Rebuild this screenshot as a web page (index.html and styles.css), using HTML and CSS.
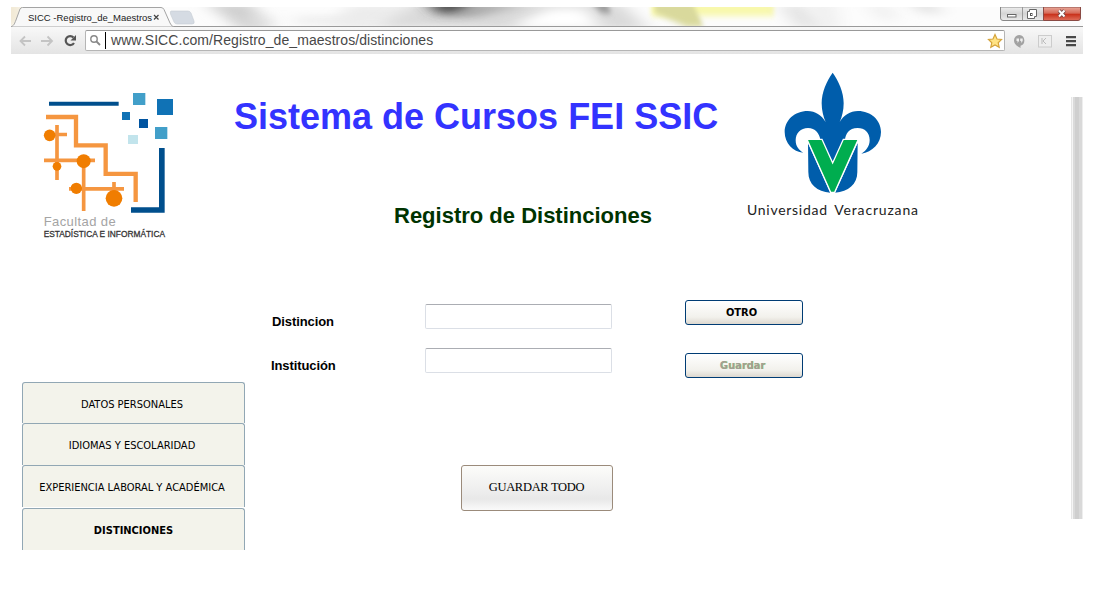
FILE: index.html
```html
<!DOCTYPE html>
<html lang="es">
<head>
<meta charset="utf-8">
<title>SICC - Registro de Maestros</title>
<link rel="stylesheet" href="styles.css">
</head>
<body>
<div class="browser">
  <div class="tabstrip">
    <svg class="glass" width="1072" height="20" viewBox="11 7 1072 20">
      <defs>
        <filter id="b" x="-30%" y="-150%" width="160%" height="400%"><feGaussianBlur stdDeviation="9 4"/></filter>
        <filter id="s" x="-30%" y="-150%" width="160%" height="400%"><feGaussianBlur stdDeviation="2 3"/></filter>
      </defs>
      <rect x="11" y="7" width="1072" height="20" fill="#fcfcfc"/>
      <path d="M0 0H20V26H0Z" fill="#eee3c8" filter="url(#b)"/>
      <path d="M205 2H250L272 29H240Z" fill="#d0d0d0" filter="url(#b)"/>
      <path d="M246 18H272V23H246ZM295 18H390V23H295Z" fill="#e4e4e4" filter="url(#b)"/>
      <path d="M350 4H440L400 27H330Z" fill="#ececec" filter="url(#b)"/>
      <path d="M420 2H620L650 30H520L380 27Z" fill="#dadada" filter="url(#b)"/>
      <path d="M425 0H480L470 12L440 15Z" fill="#444" filter="url(#b)"/>
      <path d="M478 2H530L480 16H450Z" fill="#aaa" filter="url(#b)"/>
      <path d="M520 22L550 8H585L602 29H515Z" fill="#fff" filter="url(#b)"/>
      <path d="M590 2H606L612 13H602Z" fill="#999" filter="url(#s)"/>
      <path d="M651 2H774V16H651Z" fill="#f8f8aa" filter="url(#s)"/>
      <path d="M655 2H692L704 27H687L655 13Z" fill="#d9d99c" filter="url(#s)"/>
      <path d="M778 4H805L830 28H797Z" fill="#e4e4e4" filter="url(#b)"/>
      <path d="M805 0H835L840 28H820ZM865 2H885L900 20H880Z" fill="#f0f0f0" filter="url(#b)"/>
      <path d="M905 0H925L945 13H925Z" fill="#ddd" filter="url(#b)"/>
      <path d="M11 26.5H1083" stroke="#9a9a9a"/>
      <path d="M11 27C14 25 14 25 16 20L20 9Q20.700 7.500 22.500 7.500H161Q163 7.500 164 9.500L170 23Q171.500 26.500 174 27Z" fill="#f8f8f8" stroke="#a4a4a4"/>
      <path d="M171 11H188Q190 11 191 13L194 21Q195 24 192 24H177Q175 24 174 22L170.500 14Q170 11 171 11Z" fill="#d5dbe3" stroke="#c6ccd4" stroke-width=".6"/>
      <path d="M154 15L158.500 19.500M158.500 15L154 19.500" stroke="#444" stroke-width="1.200"/>
    </svg>
    <span class="tab-title">SICC -Registro_de_Maestros</span>
    <svg class="controls" width="82" height="15" viewBox="0 0 82 15">
      <defs>
        <linearGradient id="g" x2="0" y2="1"><stop stop-color="#eee"/><stop offset=".5" stop-color="#d4d4d4"/><stop offset="1" stop-color="#eaeaea"/></linearGradient>
        <linearGradient id="r" x2="0" y2="1"><stop stop-color="#e9aa9c"/><stop offset=".45" stop-color="#d66a58"/><stop offset=".55" stop-color="#c9331d"/><stop offset="1" stop-color="#e0705c"/></linearGradient>
      </defs>
      <path d="M1.500 0H44.500V13.500H4Q1.500 13.500 1.500 11Z" fill="url(#g)" stroke="#888"/>
      <path d="M44.500 0H81.500V11Q81.500 13.500 79 13.500H44.500Z" fill="url(#r)" stroke="#8a4a44"/>
      <path d="M23.500 0V13" stroke="#999"/>
      <rect x="8.500" y="7.500" width="8.500" height="2.500" fill="#fff" stroke="#666"/>
      <path d="M30.500 2.500H37.500V9.500H35.500V11.500H28.500V4.500H30.500Z" fill="#fff" stroke="#666"/>
      <rect x="31.500" y="6.500" width="1.500" height="2" fill="none" stroke="#555"/>
      <path d="M60 3.500L65.500 9.500M65.500 3.500L60 9.500" stroke="#6b4545" stroke-width="3.600"/>
      <path d="M60 3.500L65.500 9.500M65.500 3.500L60 9.500" stroke="#fff" stroke-width="2"/>
    </svg>
  </div>
  <div class="toolbar">
    <svg class="nav-icons" width="74" height="27" viewBox="11 27 74 27" fill="none">
      <path d="M31 41H20M25 36.500L20.500 41L25 45.500M41 41H52M47.500 36.500L52 41L47.500 45.500" stroke="#c4c4c4" stroke-width="1.800"/>
      <path d="M73.500 37.500A4.500 4.500 0 1 0 74 43" stroke="#555" stroke-width="2.200"/><path d="M76 35V40.500H70.500Z" fill="#555"/>
    </svg>
    <div class="address">
      <svg width="19" height="20" viewBox="86 31 19 20" fill="none"><circle cx="94" cy="39" r="3.200" stroke="#888" stroke-width="1.400"/><path d="M96.500 41.500L100 45" stroke="#888" stroke-width="1.800"/></svg>
      <span class="caret"></span>
      <span class="url">www.SICC.com/Registro_de_maestros/distinciones</span>
      <svg class="star" width="16" height="16" viewBox="0 0 16 16"><path d="M8 1.500L10 6L14.500 6.500L11.200 9.700L12.200 14.300L8 12L3.800 14.300L4.800 9.700L1.500 6.500L6 6Z" fill="#ffe384" stroke="#d5a43c" stroke-width="1.200"/></svg>
    </div>
    <svg width="78" height="27" viewBox="1005 27 78 27">
      <path d="M1019.500 35A5.500 5.500 0 0 1 1020.500 45.700V48Q1014 45 1014 40.500A5.500 5.500 0 0 1 1019.500 35Z" fill="#a2a2a2"/>
      <path d="M1016.500 38.500H1019V41L1017.500 43V41H1016.500ZM1020.200 38.500H1022.700V41L1021.200 43V41H1020.200Z" fill="#eee"/>
      <rect x="1038.500" y="35.500" width="13" height="11.500" fill="#eee" stroke="#ccc"/>
      <path d="M1042 38V44M1046 38L1043 41L1046 44" stroke="#bbb" fill="none"/>
      <path d="M1066 37.200H1076M1066 41.200H1076M1066 45.200H1076" stroke="#484848" stroke-width="2.200"/>
    </svg>
  </div>
  <div class="viewport">
    <div class="page">
      <header class="header">
        <svg class="logo-fei" width="180" height="170" viewBox="0 0 540 510">
          <path d="M87 71.500H296" stroke="#004f8d" stroke-width="12"/>
          <path d="M425.500 204V390H333" fill="none" stroke="#004f8d" stroke-width="17"/>
          <path fill="#429fc9" d="M339 39H376V75H339ZM405 141H442V177H405Z"/>
          <path fill="#1072b5" d="M411 57H459V105H411ZM306 96H330V120H306Z"/>
          <path fill="#0054a0" d="M357 117H384V144H357Z"/><path fill="#c2e4ec" d="M324 165H354V192H324Z"/>
          <path fill="none" stroke="#f59640" stroke-width="13" d="M78 111H168V196H257V281.500H347V366"/>
          <path fill="none" stroke="#f59640" stroke-width="11" d="M111 135V300M90 163.500H141M72 241H225M191 240V393M147 326.500H312M282 306V340"/>
          <g fill="#f07d00"><circle cx="89" cy="166" r="17.500"/><circle cx="111" cy="259" r="13"/><circle cx="191" cy="243.500" r="21"/><circle cx="169" cy="325" r="17"/><circle cx="282" cy="355" r="25"/></g>
          <text x="71" y="437" textLength="216" font-size="39" fill="#a4a4a4">Facultad de</text>
          <text x="71" y="471" textLength="364" lengthAdjust="spacingAndGlyphs" font-size="25" fill="#333" stroke="#333" stroke-width=".8">ESTADÍSTICA E INFORMÁTICA</text>
        </svg>
        <div class="headings">
          <h1>Sistema de Cursos FEI SSIC</h1>
          <h2>Registro de Distinciones</h2>
        </div>
        <svg class="logo-uv" width="200" height="170" viewBox="0 0 600 510">
          <path fill="#005dab" d="M308 38C326 63 341 96 341 130C341 151 336 171 329 186C342 165 360 153 384 153C423 153 453 181 453 216C453 250 427 276 394 281C408 272 419 259 419 240C419 218 404 204 383 204C356 204 347 222 345 239L308 306L271 239C268 220 256 204 234 204C212 204 197 219 197 241C197 259 207 271 220 278C189 276 164 249 164 216C164 181 194 153 233 153C256 153 274 165 287 186C280 171 275 151 275 130C275 96 290 63 308 38Z"/>
          <path fill="#005dab" d="M234 249L301 398C261 395 235 373 235 336ZM383 249L315 398C355 395 382 373 382 336Z"/>
          <path fill="#00ad4f" stroke="#fff" stroke-width="4" d="M231 238H276L308 309L340 238H385L314 397H302Z"/>
          <text class="uv-name" y="466" font-size="42" fill="#222"><tspan x="51" textLength="240">Universidad</tspan><tspan x="313" textLength="251">Veracruzana</tspan></text>
        </svg>
      </header>
      <div class="body">
        <nav class="menu">
          <a>DATOS PERSONALES</a>
          <a>IDIOMAS Y ESCOLARIDAD</a>
          <a>EXPERIENCIA LABORAL Y ACADÉMICA</a>
          <a class="active">DISTINCIONES</a>
        </nav>
        <form class="form">
          <div class="row">
            <label for="distincion">Distincion</label>
            <input id="distincion" type="text">
            <button type="button" class="action">OTRO</button>
          </div>
          <div class="row second">
            <label for="institucion">Institución</label>
            <input id="institucion" type="text">
            <button type="button" class="action muted">Guardar</button>
          </div>
          <button type="button" class="save">GUARDAR TODO</button>
        </form>
      </div>
    </div>
    <div class="scrollbar"></div>
  </div>
</div>
</body>
</html>
```

FILE: styles.css
```css
* { box-sizing: border-box; }
body {
  margin: 0;
  background: #fff;
  font-family: "Liberation Sans", Arial, sans-serif;
}
svg { display: block; flex: none; }
.browser { width: 1072px; margin-left: 11px; padding-top: 7px; }
.tabstrip {
  position: relative;
  display: flex;
  justify-content: space-between;
  height: 20px;
}
.glass { position: absolute; left: 0; top: 0; overflow: hidden; }
.tab-title {
  position: relative;
  margin-left: 17px;
  font-size: 9.5px;
  line-height: 21px;
  white-space: nowrap;
  color: #222;
}
.controls { position: relative; margin-right: 2px; }
.toolbar {
  display: flex;
  height: 27px;
  background: linear-gradient(#f8f8f8, #e4e4e4);
}
.address {
  display: flex;
  width: 920px;
  height: 21px;
  margin-top: 3px;
  background: #fff;
  border: 1px solid #b5b5b5;
  border-top-color: #999;
  border-radius: 2px;
}
.caret { width: 1px; height: 17px; margin-top: 1px; background: #000; }
.url {
  margin-left: 5px;
  font-size: 14px;
  line-height: 19px;
  letter-spacing: 0.07px;
  color: #484848;
}
.star { margin: 2px 1px 0 auto; }
.viewport { display: flex; justify-content: space-between; }
.page { width: 1000px; }
.scrollbar {
  width: 12px;
  height: 422px;
  margin-top: 43px;
  background: linear-gradient(90deg, #e6e6e6 0 1px, #f5f5f5 1px 2px, #dadada 2px 4px, #cfcfcf 4px 8px, #d9d9d9 8px 11px, #eee 11px);
}
.header { display: flex; height: 196px; padding: 6px 0 0 9px; }
.logo-fei { margin-top: 20px; }
.headings { width: 530px; padding: 37px 0 0 34px; }
h1 {
  margin: 0;
  font-size: 36px;
  line-height: 40px;
  white-space: nowrap;
  color: #33f;
}
h2 {
  margin: 66px 0 0 160px;
  font-size: 22px;
  line-height: 26px;
  white-space: nowrap;
  color: #030;
}
.uv-name { font-family: Lato, sans-serif; }
.body { display: flex; padding: 50px 0 0 11px; }
.menu {
  display: grid;
  grid-template-rows: 41px 42px 43px 42px;
  width: 223px;
  margin-top: 82px;
  font-family: "DejaVu Sans Condensed", "DejaVu Sans", sans-serif;
  font-stretch: condensed;
  font-size: 11px;
}
.menu a {
  display: flex;
  align-items: center;
  justify-content: center;
  padding: 2px 3px 0 0;
  white-space: nowrap;
  color: #000;
  background: #f3f3eb;
  border: 1px solid #91a7b4;
  border-bottom: 0;
  border-radius: 3px 3px 0 0;
}
.menu a:nth-child(3) { margin-bottom: 1px; }
.menu .active { font-weight: bold; padding-right: 0; }
.form { padding-left: 26px; }
.row { display: flex; align-items: flex-start; height: 49px; }
label {
  width: 154px;
  padding: 14px 0 0 1px;
  font-size: 13px;
  line-height: 16px;
  font-weight: bold;
  letter-spacing: -0.1px;
  color: #000;
}
input {
  width: 187px;
  height: 25px;
  margin: 4px 73px 0 0;
  padding: 0;
  background: #fff;
  border: 1px solid #dbdfe6;
  border-top-color: #abadb3;
  border-radius: 2px;
}
.action {
  width: 118px;
  height: 25px;
  padding: 0 5px 0 0;
  border: 1px solid #003c74;
  border-radius: 3px;
  background: linear-gradient(#fff, #f2f1ec 70%, #ddd8cf);
  font: bold condensed 11px "DejaVu Sans Condensed", "DejaVu Sans", sans-serif;
  color: #000;
}
.second label { padding: 9px 0 0; }
.second input { margin-top: -1px; }
.second .action { margin-top: 4px; }
.action.muted { padding-right: 3px; color: #a19d96; text-shadow: 0.5px 0 #9cdc61; }
.save {
  display: block;
  width: 152px;
  height: 46px;
  margin: 67px 0 0 190px;
  padding: 0 1px 1px 0;
  border: 1px solid #9b8b7b;
  border-radius: 3px;
  background: linear-gradient(#fcfcfa, #eee 55%, #e8e8e8 75%, #fafafa);
  font: 12.5px "Liberation Serif", serif;
  letter-spacing: -0.3px;
  color: #000;
}
```
